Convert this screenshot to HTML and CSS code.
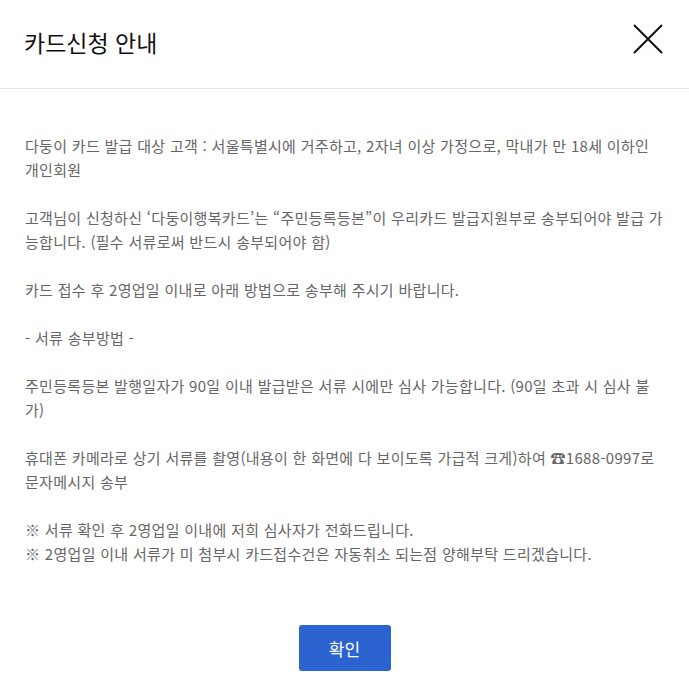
FILE: index.html
```html
<!DOCTYPE html>
<html lang="ko">
<head>
<meta charset="utf-8">
<title>카드신청 안내</title>
<link rel="stylesheet" href="styles.css">
</head>
<body>
<div class="modal">
  <header class="modal-header">
    <h1 class="modal-title">카드신청 안내</h1>
    <button class="close-btn" aria-label="닫기">
      <svg width="32" height="32" viewBox="0 0 32 32"><path d="M2 2 L30 30 M30 2 L2 30" stroke="#111" stroke-width="2" fill="none"/></svg>
    </button>
  </header>
  <div class="modal-body">
    <p class="para">다둥이 카드 발급 대상 고객 : 서울특별시에 거주하고, 2자녀 이상 가정으로, 막내가 만 18세 이하인 개인회원</p>
    <p class="para">고객님이 신청하신 ‘다둥이행복카드’는 “주민등록등본”이 우리카드 발급지원부로 송부되어야 발급 가능합니다. (필수 서류로써 반드시 송부되어야 함)</p>
    <p class="para">카드 접수 후 2영업일 이내로 아래 방법으로 송부해 주시기 바랍니다.</p>
    <p class="para">- 서류 송부방법 -</p>
    <p class="para">주민등록등본 발행일자가 90일 이내 발급받은 서류 시에만 심사 가능합니다. (90일 초과 시 심사 불가)</p>
    <p class="para">휴대폰 카메라로 상기 서류를 촬영(내용이 한 화면에 다 보이도록 가급적 크게)하여 ☎1688-0997로 문자메시지 송부</p>
    <p class="para">※ 서류 확인 후 2영업일 이내에 저희 심사자가 전화드립니다.<br>※ 2영업일 이내 서류가 미 첨부시 카드접수건은 자동취소 되는점 양해부탁 드리겠습니다.</p>
  </div>
  <footer class="modal-footer">
    <button class="confirm-btn">확인</button>
  </footer>
</div>
</body>
</html>
```

FILE: styles.css
```css
* { box-sizing: border-box; }
html, body { margin: 0; padding: 0; background: #fff; }
body {
  font-family: "Noto Sans CJK KR", "Noto Sans", sans-serif;
  width: 689px;
  height: 692px;
  overflow: hidden;
}
.modal { display: flex; flex-direction: column; }
.modal-header {
  height: 89px;
  border-bottom: 1px solid #e2e2e2;
  display: flex;
  align-items: center;
  justify-content: space-between;
  padding: 0 24px 0 24px;
}
.modal-title {
  margin: 0;
  font-size: 23px;
  font-weight: 400;
  color: #111;
  position: relative;
  top: -2px;
}
.close-btn {
  border: 0;
  background: none;
  padding: 0;
  width: 32px;
  height: 32px;
  margin-right: 1px;
  position: relative;
  top: -5px;
}
.close-btn svg { display: block; }
.modal-body {
  padding: 45px 24px 0 25px;
  font-size: 15px;
  line-height: 24px;
  color: #666;
  letter-spacing: 0.3px;
}
.para { margin: 0 0 24px 0; }
.para:last-child { margin-bottom: 0; }
.modal-footer {
  display: flex;
  justify-content: center;
  padding-top: 59px;
}
.confirm-btn {
  width: 92px;
  height: 46px;
  border: 0;
  border-radius: 3px;
  background: #2b63d0;
  color: #fff;
  font-family: "Noto Sans CJK KR", sans-serif;
  font-size: 17px;
}
```
